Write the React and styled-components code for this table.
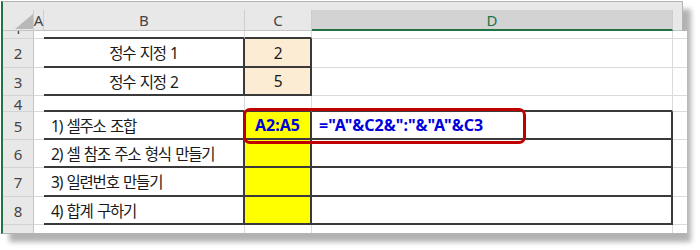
import React from "react";
import styled, { createGlobalStyle } from "styled-components";

const GlobalStyle = createGlobalStyle`
  body {
    margin: 0;
    background: #fff;
    font-family: "Noto Sans", "Noto Sans CJK KR", sans-serif;
  }
`;

// Sheet geometry
const COL_WIDTHS = [31, 10, 201, 67, 361, 9];
const COLS = ["A", "B", "C", "D", "E"];
const PEACH = "#fcecd4";
const YELLOW = "#ffff00";

const ROWS = [
  { n: "1", h: 8, peek: true },
  {
    n: "2",
    h: 29,
    cells: {
      B: { text: "정수 지정 1", center: true, box: true },
      C: { text: "2", center: true, bg: PEACH, box: true },
    },
  },
  {
    n: "3",
    h: 28,
    cells: {
      B: { text: "정수 지정 2", center: true, box: true },
      C: { text: "5", center: true, bg: PEACH, box: true },
    },
  },
  { n: "4", h: 16 },
  {
    n: "5",
    h: 28,
    cells: {
      B: { text: "1) 셀주소 조합", box: true },
      C: { text: "A2:A5", center: true, bg: YELLOW, strong: true, box: true },
      D: { text: '="A"&C2&":"&"A"&C3', strong: true, box: true },
    },
  },
  {
    n: "6",
    h: 28,
    cells: {
      B: { text: "2) 셀 참조 주소 형식 만들기", box: true },
      C: { bg: YELLOW, box: true },
      D: { box: true },
    },
  },
  {
    n: "7",
    h: 29,
    cells: {
      B: { text: "3) 일련번호 만들기", box: true },
      C: { bg: YELLOW, box: true },
      D: { box: true },
    },
  },
  {
    n: "8",
    h: 28,
    cells: {
      B: { text: "4) 합계 구하기", box: true },
      C: { bg: YELLOW, box: true },
      D: { box: true },
    },
  },
  { n: "9", h: 8, hideNum: true },
];

const isBox = (r, col) => !!(ROWS[r] && ROWS[r].cells && ROWS[r].cells[col] && ROWS[r].cells[col].box);

function App() {
  return (
    <>
      <GlobalStyle />
      <Page>
        <Frame $rows={ROWS.map((r) => r.h)}>
          <TopBand />
          <Corner>
            <svg width="31" height="21" viewBox="0 0 31 21">
              <polygon points="12,19 30,19 30,4" fill="#b9b9b9" />
            </svg>
          </Corner>
          {COLS.map((c, i) => (
            <ColHead key={c} $selected={c === "D"} $last={i === COLS.length - 1}>
              {c !== "E" && c}
            </ColHead>
          ))}

          {ROWS.map((row, r) => (
            <React.Fragment key={row.n}>
              <RowHead $peek={row.peek} $last={r === ROWS.length - 1}>
                {!row.hideNum && <span>{row.n}</span>}
              </RowHead>
              {COLS.map((col, ci) => {
                const cell = (row.cells && row.cells[col]) || {};
                const next = COLS[ci + 1];
                return (
                  <Cell
                    key={col}
                    $center={cell.center}
                    $bg={cell.bg}
                    $strong={cell.strong}
                    $darkR={isBox(r, col) || isBox(r, next)}
                    $darkB={isBox(r, col) || isBox(r + 1, col)}
                    $lastCol={ci === COLS.length - 1}
                    $lastRow={r === ROWS.length - 1}
                  >
                    {cell.text}
                  </Cell>
                );
              })}
            </React.Fragment>
          ))}

          <Callout />
        </Frame>
      </Page>
    </>
  );
}

const Page = styled.div`
  padding: 1px 0 0 1px;
  width: 700px;
  height: 250px;
  box-sizing: border-box;
`;

const Frame = styled.div`
  position: relative;
  display: grid;
  grid-template-columns: ${COL_WIDTHS.map((w) => w + "px").join(" ")};
  grid-template-rows: 8px 21px ${(p) => p.$rows.map((h) => h + "px").join(" ")};
  width: max-content;
  background: #fff;
  border-top: 1px solid #b4b4b4;
  border-left: 2px solid #217346;
  border-right: 1px solid #b4b4b4;
  border-bottom: 1px solid #b4b4b4;
  box-shadow: 8px 8px 5px rgba(0, 0, 0, 0.3);
`;

const TopBand = styled.div`
  grid-column: 1 / -1;
  background: #e8e8e8;
`;

const Corner = styled.div`
  box-sizing: border-box;
  background: #e8e8e8;
  border-right: 1px solid #cdcdcd;
  border-bottom: 1px solid #c4c4c4;
  svg {
    display: block;
  }
`;

const ColHead = styled.div`
  box-sizing: border-box;
  display: flex;
  align-items: center;
  justify-content: center;
  font-size: 15px;
  line-height: 1;
  color: ${(p) => (p.$selected ? "#217346" : "#444")};
  background: ${(p) => (p.$selected ? "#d3d3d3" : "#e8e8e8")};
  border-right: ${(p) => (p.$last ? "none" : "1px solid #cdcdcd")};
  border-bottom: ${(p) => (p.$selected ? "2px solid #217346" : "1px solid #c4c4c4")};
  padding-top: ${(p) => (p.$selected ? 2 : 1)}px;
`;

const RowHead = styled.div`
  box-sizing: border-box;
  display: flex;
  align-items: ${(p) => (p.$peek ? "flex-start" : "center")};
  justify-content: center;
  overflow: ${(p) => (p.$peek ? "hidden" : "visible")};
  font-size: 15px;
  line-height: 14px;
  color: #444;
  background: #e8e8e8;
  border-right: 1px solid #c4c4c4;
  border-bottom: ${(p) => (p.$last ? "none" : "1px solid #d2d2d2")};
  span {
    margin-top: ${(p) => (p.$peek ? "-10px" : "0")};
  }
`;

const Cell = styled.div`
  box-sizing: border-box;
  display: flex;
  align-items: center;
  justify-content: ${(p) => (p.$center ? "center" : "flex-start")};
  padding: 0 ${(p) => (p.$center ? 0 : 7)}px;
  overflow: hidden;
  white-space: nowrap;
  background: ${(p) => p.$bg || "#fff"};
  font-size: ${(p) => (p.$strong ? 16 : 15.5)}px;
  letter-spacing: ${(p) => (p.$strong ? "0" : "-1.2px")};
  word-spacing: ${(p) => (p.$strong ? "0" : "1.5px")};
  font-weight: ${(p) => (p.$strong ? 700 : 400)};
  color: ${(p) => (p.$strong ? "#0000dd" : "#1a1a1a")};
  border-right: ${(p) =>
    p.$lastCol ? "none" : p.$darkR ? "2px solid #3a3a3a" : "1px solid #dadada"};
  border-bottom: ${(p) =>
    p.$lastRow ? "none" : p.$darkB ? "2px solid #3a3a3a" : "1px solid #dadada"};
`;

// Red rounded highlight drawn over row 5
const Callout = styled.div`
  position: absolute;
  left: 240px;
  top: 106px;
  width: 283px;
  height: 36px;
  box-sizing: border-box;
  border: 3px solid #c00000;
  border-radius: 7px;
  pointer-events: none;
`;

export default App;
